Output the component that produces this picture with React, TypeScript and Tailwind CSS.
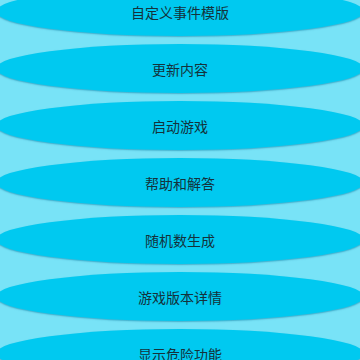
import React from 'react';

const items = [
  '自定义事件模版',
  '更新内容',
  '启动游戏',
  '帮助和解答',
  '随机数生成',
  '游戏版本详情',
  '显示危险功能',
];

export default function App() {
  return (
    <div
      className="w-[360px] h-[360px] overflow-hidden bg-[#78e3f7]"
      style={{ fontFamily: '"Noto Sans CJK SC", "Noto Sans", sans-serif' }}
    >
      {/* 菜单列表 */}
      <div className="flex flex-col gap-[8px] -mt-[13px] -ml-[4px]">
        {items.map((label) => (
          <div
            key={label}
            className="h-[49px] w-[368px] shrink-0 rounded-[50%] bg-[#00c9f0] shadow-[0_1px_1.5px_rgba(0,110,150,0.45)] flex items-center justify-center pt-[1px] text-[14px] text-[#14323b]"
          >
            {label}
          </div>
        ))}
      </div>
    </div>
  );
}
